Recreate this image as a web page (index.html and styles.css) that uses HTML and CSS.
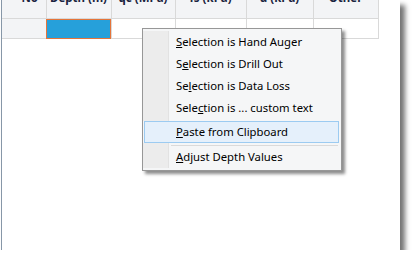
FILE: index.html
```html
<!DOCTYPE html>
<html lang="en">
  <head>
    <meta charset="UTF-8" />
    <meta name="viewport" content="width=device-width, initial-scale=1.0" />
    <title>CPT Grid</title>
    <link rel="stylesheet" href="styles.css">
  </head>
  <body>
    <div class="window">
      <div class="grid-wrap">
        <table class="grid">
          <colgroup>
            <col class="c-no" />
            <col class="c-depth" />
            <col class="c-qc" />
            <col class="c-fs" />
            <col class="c-u" />
            <col class="c-other" />
          </colgroup>
          <tr class="head">
            <th class="no">No</th>
            <th>Depth (m)</th>
            <th>qc (MPa)</th>
            <th>fs (kPa)</th>
            <th>u (kPa)</th>
            <th>Other</th>
          </tr>
          <tr class="row">
            <td class="rowhead"></td>
            <td class="selected"></td>
            <td></td>
            <td></td>
            <td></td>
            <td></td>
          </tr>
        </table>
      </div>

      <div class="menu">
        <div class="item"><span class="icon"></span><span class="label"><u>S</u>election is Hand Auger</span></div>
        <div class="item"><span class="icon"></span><span class="label">S<u>e</u>lection is Drill Out</span></div>
        <div class="item"><span class="icon"></span><span class="label">Se<u>l</u>ection is Data Loss</span></div>
        <div class="item"><span class="icon"></span><span class="label">Sele<u>c</u>tion is ... custom text</span></div>
        <div class="gap"><span class="icon"></span></div>
        <div class="item hover"><span class="icon"></span><span class="label"><u>P</u>aste from Clipboard</span></div>
        <div class="sep"><span class="icon"></span><span class="line"></span></div>
        <div class="item last"><span class="icon"></span><span class="label"><u>A</u>djust Depth Values</span></div>
      </div>
    </div>
  </body>
</html>
```

FILE: styles.css
```css
body {
  margin: 0;
  background: #ffffff;
  font-family: "Noto Sans", "Open Sans", sans-serif;
  font-size: 11.3px;
}

.window {
  position: relative;
  width: 398px;
  height: 250px;
  margin-left: 1px;
  background: #ffffff;
  border-left: 1px solid #8797a8;
  box-shadow: 5px 5px 5px rgba(0, 0, 0, 0.55);
}

.grid-wrap {
  height: 41px;
  overflow: hidden;
}

.grid {
  width: 376px;
  margin-top: -9px;
  border-collapse: collapse;
  table-layout: fixed;
}

.c-no { width: 44px; }
.c-depth { width: 65px; }
.c-qc { width: 64px; }
.c-fs { width: 71px; }
.c-u { width: 67px; }
.c-other { width: 65px; }

.grid th,
.grid td {
  border: 1px solid #d9d9d9;
  padding: 0;
  overflow: hidden;
  white-space: nowrap;
}

.grid tr:first-child th {
  border-top: none;
}

.grid tr th:first-child,
.grid tr td:first-child {
  border-left: none;
}

.head th {
  height: 27px;
  background: #f3f4f6;
  color: #1b2440;
  font-size: 11.5px;
  font-weight: bold;
  vertical-align: top;
  line-height: 14px;
}

.head .no {
  padding-left: 12px;
}

.row td {
  height: 19px;
  background: #ffffff;
}

.row .rowhead {
  background: #f3f4f6;
}

.row .selected {
  background: #26a0da;
  outline: 1px solid #e5743a;
  outline-offset: -1px;
}

.menu {
  position: absolute;
  left: 140px;
  top: 28px;
  width: 198px;
  padding: 2px 0;
  background: #f5f6f7;
  border: 1px solid #979797;
  box-shadow: 3px 3px 3px rgba(0, 0, 0, 0.45);
  color: #000000;
}

.item,
.gap,
.sep {
  display: flex;
  align-items: stretch;
}

.item {
  height: 22px;
  line-height: 22px;
}

.icon {
  width: 25px;
  flex: none;
  background: #ececec;
  border-right: 1px solid #e2e2e2;
}

.label {
  padding-left: 7px;
  white-space: nowrap;
}

.gap {
  height: 2px;
}

.item.hover {
  height: 20px;
  line-height: 20px;
  margin: 0 2px 0 1px;
  background: #e5f0fb;
  border: 1px solid #9ccbf1;
}

.item.hover .icon {
  width: 23px;
  background: transparent;
  border-right: none;
}

.item.hover .label {
  padding-left: 8px;
}

.sep {
  height: 4px;
}

.sep .line {
  flex: 1;
  margin: 2px 3px 0 2px;
  height: 1px;
  background: #dadada;
}

.item.last {
  height: 21px;
  line-height: 20px;
}
```
